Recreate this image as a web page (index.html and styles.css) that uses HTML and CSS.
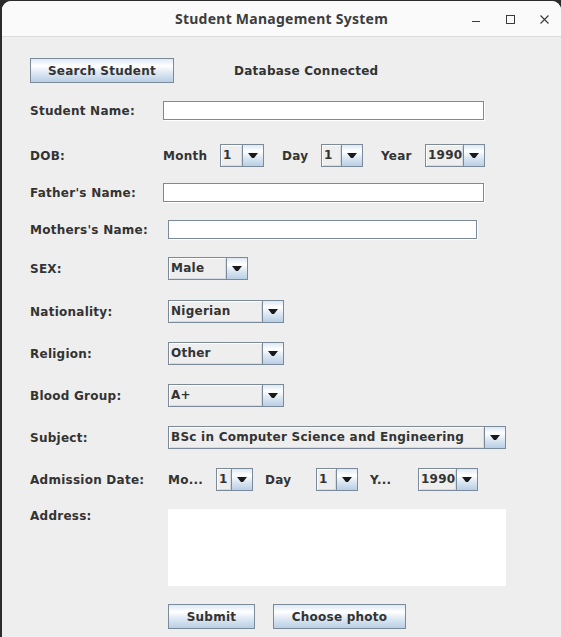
FILE: index.html
```html
<!DOCTYPE html>
<html>
<head>
<meta charset="utf-8">
<title>Student Management System</title>
<link rel="stylesheet" href="styles.css">
</head>
<body>
<div class="window">
  <div class="titlebar">
    <span class="title">Student Management System</span>
    <svg class="controls" width="101" height="35" viewBox="0 0 101 35">
      <path d="M12 20.5H20" stroke="#3a3a3a" stroke-width="1" fill="none"/>
      <rect x="46.5" y="14.5" width="8" height="8" stroke="#3a3a3a" stroke-width="1" fill="none"/>
      <path d="M80.5 14.5L88.5 22.5M88.5 14.5L80.5 22.5" stroke="#3a3a3a" stroke-width="1.1" fill="none"/>
    </svg>
  </div>
  <div class="content">
    <div class="row r-search">
      <button class="btn btn-search">Search Student</button>
      <span class="status">Database Connected</span>
    </div>
    <div class="row r-name">
      <span class="lbl">Student Name:</span>
      <div class="field field-long"></div>
    </div>
    <div class="row r-dob">
      <span class="lbl">DOB:</span>
      <span class="sub w-month">Month</span>
      <div class="combo w-44"><span class="val">1</span><span class="arr"></span></div>
      <span class="sub w-day">Day</span>
      <div class="combo w-42"><span class="val">1</span><span class="arr"></span></div>
      <span class="sub w-year">Year</span>
      <div class="combo w-60"><span class="val">1990</span><span class="arr"></span></div>
    </div>
    <div class="row r-father">
      <span class="lbl">Father's Name:</span>
      <div class="field field-long"></div>
    </div>
    <div class="row r-mother">
      <span class="lbl wide">Mothers's Name:</span>
      <div class="field field-mid"></div>
    </div>
    <div class="row r-sex">
      <span class="lbl wide">SEX:</span>
      <div class="combo w-80"><span class="val">Male</span><span class="arr"></span></div>
    </div>
    <div class="row r-gap20">
      <span class="lbl wide">Nationality:</span>
      <div class="combo w-116"><span class="val">Nigerian</span><span class="arr"></span></div>
    </div>
    <div class="row r-gap19">
      <span class="lbl wide">Religion:</span>
      <div class="combo w-116"><span class="val">Other</span><span class="arr"></span></div>
    </div>
    <div class="row r-gap19">
      <span class="lbl wide">Blood Group:</span>
      <div class="combo w-116"><span class="val">A+</span><span class="arr"></span></div>
    </div>
    <div class="row r-gap19">
      <span class="lbl wide">Subject:</span>
      <div class="combo w-338"><span class="val">BSc in Computer Science and Engineering</span><span class="arr"></span></div>
    </div>
    <div class="row r-gap19">
      <span class="lbl wide">Admission Date:</span>
      <span class="sub w-mo">Mo...</span>
      <div class="combo w-37"><span class="val">1</span><span class="arr"></span></div>
      <span class="sub w-aday">Day</span>
      <div class="combo w-42"><span class="val">1</span><span class="arr"></span></div>
      <span class="sub w-y">Y...</span>
      <div class="combo w-60"><span class="val">1990</span><span class="arr"></span></div>
    </div>
    <div class="row r-address">
      <span class="lbl wide lbl-top">Address:</span>
      <div class="textarea"></div>
    </div>
    <div class="row r-buttons">
      <span class="lbl wide"></span>
      <button class="btn btn-submit">Submit</button>
      <button class="btn btn-photo">Choose photo</button>
    </div>
  </div>
</div>
</body>
</html>
```

FILE: styles.css
```css
html, body {
  margin: 0;
  padding: 0;
  height: 100%;
  overflow: hidden;
  background: #2b2b2b;
}

body {
  font-family: "DejaVu Sans", sans-serif;
  font-weight: bold;
  font-size: 12px;
  letter-spacing: 0.25px;
  color: #333333;
}

.window {
  margin-left: 2px;
  margin-top: 1px;
  width: 559px;
  height: 636px;
  background: #eeeeee;
  border-radius: 9px 9px 0 0;
  overflow: hidden;
}

.titlebar {
  position: relative;
  height: 35px;
  background: #fafafa;
  border-bottom: 1px solid #dadada;
  display: flex;
  align-items: center;
  justify-content: center;
}

.title {
  font-family: "Noto Sans", sans-serif;
  font-weight: bold;
  font-size: 14px;
  letter-spacing: 0.25px;
  color: #3d3d3d;
}

.controls {
  position: absolute;
  right: 0;
  top: 0;
}

.content {
  padding: 21px 0 0 28px;
}

.row {
  display: flex;
  align-items: center;
}

.r-name { margin-top: 18px; }
.r-dob { margin-top: 24px; }
.r-father { margin-top: 16px; }
.r-mother { margin-top: 18px; }
.r-sex { margin-top: 18px; }
.r-gap20 { margin-top: 20px; }
.r-gap19 { margin-top: 19px; }
.r-address { margin-top: 18px; align-items: flex-start; }
.r-buttons { margin-top: 18px; }

.lbl {
  flex: none;
  width: 133px;
  white-space: nowrap;
}

.lbl.wide { width: 138px; }

.lbl-top {
  line-height: 15px;
}

.sub {
  flex: none;
  white-space: nowrap;
}

.w-month { width: 57px; }
.w-day { width: 39px; margin-left: 18px; }
.w-year { width: 44px; margin-left: 18px; }
.w-mo { width: 48px; }
.w-aday { width: 51px; margin-left: 12px; }
.w-y { width: 48px; margin-left: 12px; }

.btn {
  font-family: "DejaVu Sans", sans-serif;
  font-weight: bold;
  font-size: 12px;
  letter-spacing: 0.25px;
  color: #333333;
  height: 25px;
  box-sizing: border-box;
  border: 1px solid #7a8a99;
  border-radius: 0;
  background: linear-gradient(#dde8f3 0%, #ffffff 30%, #dde8f3 60%, #b8cfe5 100%);
  padding: 0;
  margin: 0;
  flex: none;
}

.btn-search { width: 144px; }
.btn-submit { width: 87px; }
.btn-photo { width: 133px; margin-left: 18px; }

.status {
  margin-left: 60px;
}

.field {
  height: 19px;
  box-sizing: border-box;
  border: 1px solid #7a8a99;
  background: #ffffff;
  box-shadow: 1px 1px 0 #ffffff;
  flex: none;
}

.field-long { width: 321px; }
.field-mid { width: 309px; }

.combo {
  display: flex;
  flex: none;
  height: 23px;
  box-sizing: border-box;
  border: 1px solid #7a8a99;
  background: #eeeeee;
}

.combo .val {
  flex: 1;
  min-width: 0;
  padding-left: 2px;
  line-height: 20px;
  white-space: nowrap;
  overflow: hidden;
  box-shadow: inset 1px 1px 0 #ffffff, inset -1px -1px 0 #d4dbe2;
}

.combo .arr {
  flex: none;
  width: 20px;
  border-left: 1px solid #7a8a99;
  background: linear-gradient(#dde8f3 0%, #ffffff 30%, #dde8f3 60%, #b8cfe5 100%);
  display: flex;
  align-items: center;
  justify-content: center;
}

.combo .arr::after {
  content: "";
  width: 10px;
  height: 5px;
  background: #1a1a1a;
  clip-path: polygon(0 0, 100% 0, 60% 100%, 40% 100%);
}

.w-37 { width: 37px; }
.w-42 { width: 42px; }
.w-44 { width: 44px; }
.w-60 { width: 60px; }
.w-80 { width: 80px; }
.w-116 { width: 116px; }
.w-338 { width: 338px; }

.textarea {
  width: 338px;
  height: 77px;
  background: #ffffff;
  flex: none;
}
```
